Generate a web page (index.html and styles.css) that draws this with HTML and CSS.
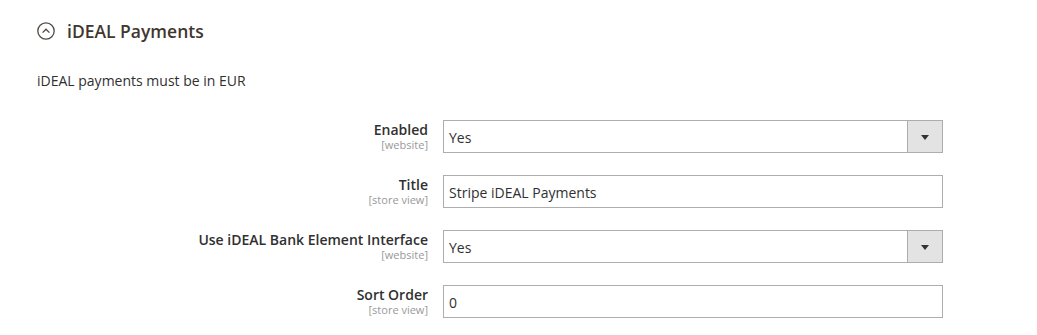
FILE: index.html
```html
<!DOCTYPE html>
<html>
<head>
<meta charset="utf-8">
<link rel="stylesheet" href="styles.css">
</head>
<body>
<div class="section">
  <div class="section-head">
    <svg class="toggle" width="18" height="18" viewBox="0 0 18 18" aria-hidden="true">
      <circle cx="9" cy="9" r="8.2" fill="none" stroke="#514943" stroke-width="1.3"/>
      <path d="M5.6 10.6 L9 7.2 L12.4 10.6" fill="none" stroke="#514943" stroke-width="1.3"/>
    </svg>
    <span class="section-title">iDEAL Payments</span>
  </div>
  <p class="comment">iDEAL payments must be in EUR</p>
  <div class="rows">
    <div class="row">
      <div class="label"><span class="label-text">Enabled</span><span class="scope">[website]</span></div>
      <div class="control select"><span class="value">Yes</span><span class="arrow"></span></div>
    </div>
    <div class="row">
      <div class="label"><span class="label-text">Title</span><span class="scope">[store view]</span></div>
      <div class="control"><span class="value">Stripe iDEAL Payments</span></div>
    </div>
    <div class="row">
      <div class="label"><span class="label-text">Use iDEAL Bank Element Interface</span><span class="scope">[website]</span></div>
      <div class="control select"><span class="value">Yes</span><span class="arrow"></span></div>
    </div>
    <div class="row">
      <div class="label"><span class="label-text">Sort Order</span><span class="scope">[store view]</span></div>
      <div class="control"><span class="value">0</span></div>
    </div>
  </div>
</div>
</body>
</html>
```
FILE: styles.css
```css
html, body {
  margin: 0;
  padding: 0;
  background: #ffffff;
  font-family: "Open Sans", "DejaVu Sans", sans-serif;
  color: #303030;
}
.section {
  padding-top: 22px;
}
.section-head {
  display: flex;
  align-items: center;
  padding-left: 37px;
  height: 18px;
}
.toggle {
  display: block;
  flex: none;
}
.section-title {
  margin-left: 12px;
  font-size: 17.5px;
  font-weight: 600;
  color: #41362f;
  line-height: 18px;
}
.comment {
  margin: 33px 0 0 37px;
  font-size: 14px;
  line-height: 16px;
  color: #303030;
}
.rows {
  margin-top: 31px;
  display: flex;
  flex-direction: column;
  gap: 22px;
}
.row {
  display: flex;
  align-items: flex-start;
}
.label {
  width: 428px;
  flex: none;
  display: flex;
  flex-direction: column;
  align-items: flex-end;
  padding-top: 2px;
}
.label-text {
  font-size: 14px;
  font-weight: 600;
  line-height: 16px;
  color: #303030;
}
.scope {
  font-size: 11px;
  line-height: 12px;
  margin-top: 1px;
  color: #999999;
}
.control {
  margin-left: 15px;
  width: 500px;
  height: 33px;
  box-sizing: border-box;
  border: 1px solid #adadad;
  display: flex;
  align-items: center;
  padding-left: 5px;
  background: #fff;
}
.value {
  flex: 1;
  font-size: 14px;
  line-height: 16px;
  color: #303030;
  padding-top: 3px;
}
.arrow {
  align-self: stretch;
  width: 34px;
  flex: none;
  background: #e3e3e3;
  border-left: 1px solid #adadad;
  position: relative;
}
.arrow::after {
  content: "";
  position: absolute;
  left: 13px;
  top: 14px;
  border-left: 4px solid transparent;
  border-right: 4px solid transparent;
  border-top: 5px solid #333333;
}
```
